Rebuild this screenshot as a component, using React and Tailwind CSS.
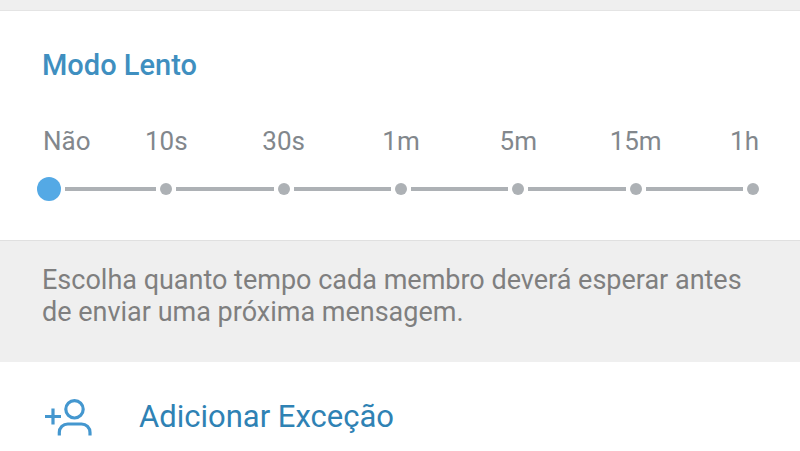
import React, {useState} from "react";

const delays = ["Não", "10s", "30s", "1m", "5m", "15m", "1h"];

export default function App() {
  const [delay, setDelay] = useState(0);

  return (
    <div className="min-h-screen bg-white font-['Roboto',sans-serif]">
      <div className="h-[11px] border-b border-[#e4e4e4] bg-[#efefef]"></div>
      <section className="pt-9 pr-[41px] pb-[39px] pl-[42px]">
        <h2 className="text-[29px] leading-9 font-medium text-[#3f8fc0]">
          <label htmlFor="delay">Modo Lento</label>
        </h2>
        <SlowModeSlider value={delay} onChange={setDelay} />
      </section>
      <div className="border-t border-[#e0e0e0] bg-[#efefef] px-[42px] pt-[23px] pb-[34px]">
        <p className="text-[27px] leading-8 text-[#7f7f7f]">
          Escolha quanto tempo cada membro deverá esperar antes de enviar uma
          próxima mensagem.
        </p>
      </div>
      <button
        type="button"
        className="flex w-full cursor-pointer items-center gap-[47px] px-11 pt-[33px] pb-3 text-left text-[31px] leading-[44px] text-[#2f82b4]"
      >
        <AddUserIcon />
        <span>Adicionar Exceção</span>
      </button>
    </div>
  );
}

function SlowModeSlider({value, onChange}) {
  return (
    <div className="mt-10 pl-px">
      <div className="flex justify-between text-[26px] leading-9 text-[#82878c]">
        {delays.map((label, i) => (
          <span
            key={label}
            className={
              "flex w-3 whitespace-nowrap " +
              (i === 0
                ? "justify-start"
                : i === delays.length - 1
                  ? "justify-end"
                  : "justify-center")
            }
          >
            {label}
          </span>
        ))}
      </div>
      <div className="relative mt-[18px] flex h-6 items-center">
        {delays.map((label, i) => (
          <React.Fragment key={label}>
            {i > 0 && (
              <div className="flex-1">
                <div
                  className={
                    "h-1 bg-[#adb1b5] " +
                    (value === i - 1
                      ? "mr-1 ml-[10px]"
                      : value === i
                        ? "mr-[10px] ml-1"
                        : "mx-1")
                  }
                ></div>
              </div>
            )}
            <span className="flex h-3 w-3 items-center justify-center">
              <span
                className={
                  "shrink-0 rounded-full " +
                  (value === i ? "h-6 w-6 bg-[#54a9e5]" : "h-3 w-3 bg-[#adb1b5]")
                }
              ></span>
            </span>
          </React.Fragment>
        ))}
        <input
          id="delay"
          type="range"
          min={0}
          max={delays.length - 1}
          value={value}
          aria-valuetext={delays[value]}
          onChange={(e) => onChange(Number(e.target.value))}
          className="absolute inset-0 w-full cursor-pointer opacity-0"
        />
      </div>
    </div>
  );
}

function AddUserIcon() {
  return (
    <svg
      width="48"
      height="44"
      viewBox="0 0 48 44"
      fill="none"
      stroke="#4497cf"
      strokeWidth="3.2"
      className="shrink-0"
      aria-hidden="true"
    >
      <path d="M1 21.500h16M9 13.500v16" />
      <circle cx="30.500" cy="14.300" r="8.700" />
      <path d="M15.300 40.500v-3a8.500 8.500 0 0 1 8.500-8.500h13.700a8.500 8.500 0 0 1 8.500 8.500v3" />
    </svg>
  );
}
